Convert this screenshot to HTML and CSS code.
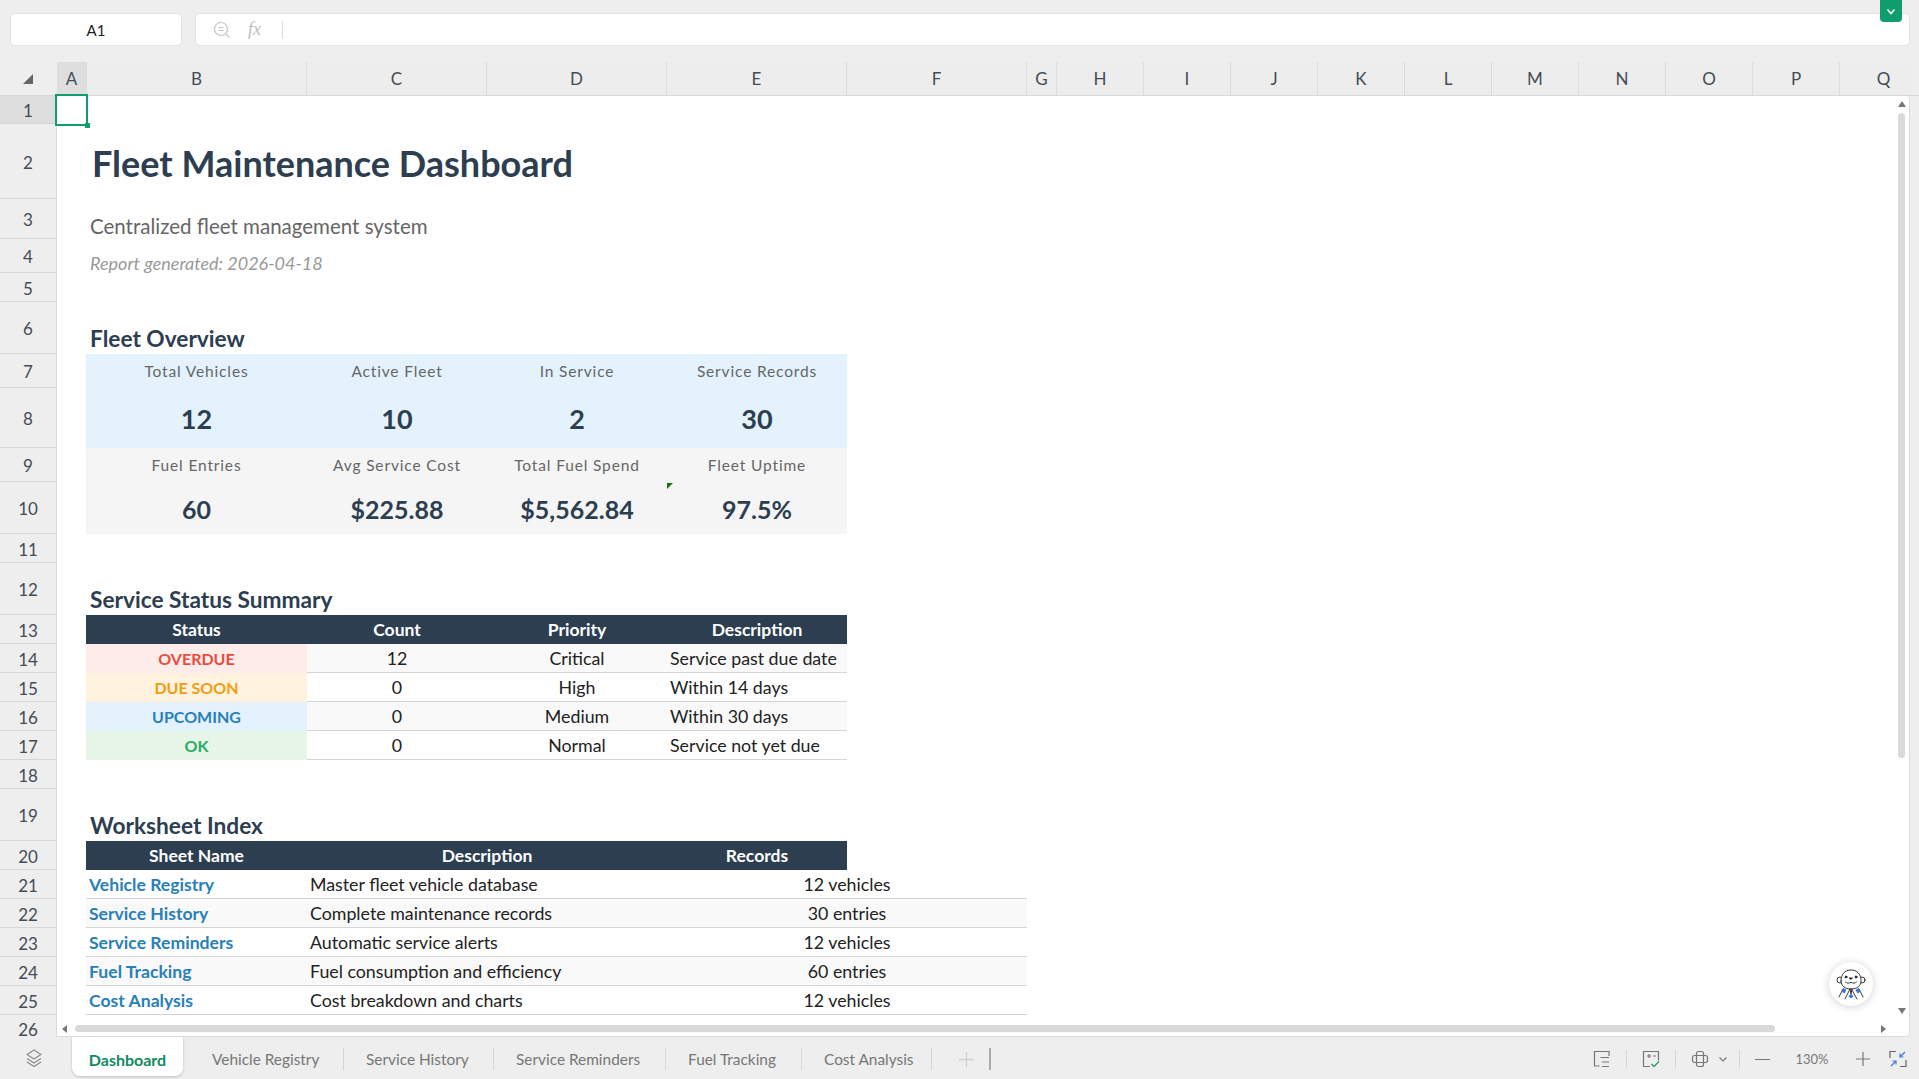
FILE: index.html
```html
<!DOCTYPE html>
<html lang="en">
<head>
  <meta charset="utf-8">
  <title>Fleet Maintenance Dashboard</title>
  <link rel="stylesheet" href="styles.css">
</head>
<body>
  <!-- Name box and formula bar -->
  <div class="formula-row">
    <div class="name-box">A1</div>
    <div class="formula-box">
      <svg class="zoom-icon" width="20" height="20" viewBox="0 0 20 20" fill="none" stroke="#c4c4c4" stroke-width="1.2">
        <circle cx="9" cy="9" r="6.500"/>
        <path d="M6.500 7.500h5M6.500 10.500h5M14 14l3.500 3.500"/>
      </svg>
      <span class="fx">fx</span>
      <span class="fx-divider"></span>
    </div>
    <div class="collapse-tab">
      <svg width="10" height="8" viewBox="0 0 10 8" fill="none" stroke="#fff" stroke-width="1.6"><path d="M1.500 1.500 5 5.500l3.500-4"/></svg>
    </div>
  </div>

  <!-- Column letters -->
  <div class="col-header">
    <div class="corner"><span class="corner-mark"></span></div>
    <div class="col-cells">
      <span class="col-cell is-active">A</span>
      <span class="col-cell">B</span>
      <span class="col-cell">C</span>
      <span class="col-cell">D</span>
      <span class="col-cell">E</span>
      <span class="col-cell">F</span>
      <span class="col-cell">G</span>
      <span class="col-cell">H</span>
      <span class="col-cell">I</span>
      <span class="col-cell">J</span>
      <span class="col-cell">K</span>
      <span class="col-cell">L</span>
      <span class="col-cell">M</span>
      <span class="col-cell">N</span>
      <span class="col-cell">O</span>
      <span class="col-cell">P</span>
      <span class="col-cell">Q</span>
    </div>
  </div>

  <div class="workspace">
    <!-- Row numbers -->
    <div class="row-header">
      <span class="row-cell is-active">1</span>
      <span class="row-cell">2</span>
      <span class="row-cell">3</span>
      <span class="row-cell">4</span>
      <span class="row-cell">5</span>
      <span class="row-cell">6</span>
      <span class="row-cell">7</span>
      <span class="row-cell">8</span>
      <span class="row-cell">9</span>
      <span class="row-cell">10</span>
      <span class="row-cell">11</span>
      <span class="row-cell">12</span>
      <span class="row-cell">13</span>
      <span class="row-cell">14</span>
      <span class="row-cell">15</span>
      <span class="row-cell">16</span>
      <span class="row-cell">17</span>
      <span class="row-cell">18</span>
      <span class="row-cell">19</span>
      <span class="row-cell">20</span>
      <span class="row-cell">21</span>
      <span class="row-cell">22</span>
      <span class="row-cell">23</span>
      <span class="row-cell">24</span>
      <span class="row-cell">25</span>
      <span class="row-cell">26</span>
    </div>

    <!-- Worksheet -->
    <div class="sheet">
      <div class="grid">
        <div class="r2 title">Fleet Maintenance Dashboard</div>
        <div class="r3 subtitle">Centralized fleet management system</div>
        <div class="r4 generated">Report generated: 2026-04-18</div>
        <div class="r6 section">Fleet Overview</div>

        <div class="r7 cb kpi-label blue">Total Vehicles</div>
        <div class="r7 cc kpi-label blue">Active Fleet</div>
        <div class="r7 cd kpi-label blue">In Service</div>
        <div class="r7 ce kpi-label blue">Service Records</div>
        <div class="r8 cb kpi-value blue">12</div>
        <div class="r8 cc kpi-value blue">10</div>
        <div class="r8 cd kpi-value blue">2</div>
        <div class="r8 ce kpi-value blue">30</div>

        <div class="r9 cb kpi-label grey">Fuel Entries</div>
        <div class="r9 cc kpi-label grey">Avg Service Cost</div>
        <div class="r9 cd kpi-label grey">Total Fuel Spend</div>
        <div class="r9 ce kpi-label grey">Fleet Uptime</div>
        <div class="r10 cb kpi-value kpi-small grey">60</div>
        <div class="r10 cc kpi-value kpi-small grey">$225.88</div>
        <div class="r10 cd kpi-value kpi-small grey">$5,562.84</div>
        <div class="r10 ce kpi-value kpi-small grey">97.5%</div>

        <div class="r12 section">Service Status Summary</div>
        <div class="r13 cb th">Status</div>
        <div class="r13 cc th">Count</div>
        <div class="r13 cd th">Priority</div>
        <div class="r13 ce th">Description</div>

        <div class="r14 cb status overdue">OVERDUE</div>
        <div class="r14 cc td center alt">12</div>
        <div class="r14 cd td center alt">Critical</div>
        <div class="r14 ce td alt">Service past due date</div>
        <div class="r15 cb status due-soon">DUE SOON</div>
        <div class="r15 cc td center">0</div>
        <div class="r15 cd td center">High</div>
        <div class="r15 ce td">Within 14 days</div>
        <div class="r16 cb status upcoming">UPCOMING</div>
        <div class="r16 cc td center alt">0</div>
        <div class="r16 cd td center alt">Medium</div>
        <div class="r16 ce td alt">Within 30 days</div>
        <div class="r17 cb status ok">OK</div>
        <div class="r17 cc td center">0</div>
        <div class="r17 cd td center">Normal</div>
        <div class="r17 ce td">Service not yet due</div>

        <div class="r19 section">Worksheet Index</div>
        <div class="r20 cb th">Sheet Name</div>
        <div class="r20 c-desc th">Description</div>
        <div class="r20 ce th">Records</div>

        <div class="r21 cb td link">Vehicle Registry</div>
        <div class="r21 c-desc td">Master fleet vehicle database</div>
        <div class="r21 c-rec td center">12 vehicles</div>
        <div class="r22 cb td link alt">Service History</div>
        <div class="r22 c-desc td alt">Complete maintenance records</div>
        <div class="r22 c-rec td center alt">30 entries</div>
        <div class="r23 cb td link">Service Reminders</div>
        <div class="r23 c-desc td">Automatic service alerts</div>
        <div class="r23 c-rec td center">12 vehicles</div>
        <div class="r24 cb td link alt">Fuel Tracking</div>
        <div class="r24 c-desc td alt">Fuel consumption and efficiency</div>
        <div class="r24 c-rec td center alt">60 entries</div>
        <div class="r25 cb td link">Cost Analysis</div>
        <div class="r25 c-desc td">Cost breakdown and charts</div>
        <div class="r25 c-rec td center">12 vehicles</div>
      </div>

      <!-- Things floating over the grid -->
      <div class="selection"><span class="selection-handle"></span></div>
      <span class="note-mark"></span>
      <span class="arrow arrow-up"></span>
      <span class="arrow arrow-down"></span>
      <span class="arrow arrow-left"></span>
      <span class="arrow arrow-right"></span>
      <span class="scroll-v"></span>
      <span class="scroll-h"></span>
      <div class="assistant">
        <svg width="44" height="44" viewBox="0 0 44 44" fill="none" stroke="#222" stroke-width="0.9" stroke-linecap="round" stroke-linejoin="round">
          <circle cx="11" cy="18" r="3" fill="#fff"/>
          <circle cx="33" cy="18" r="3" fill="#fff"/>
          <path d="M12 19c0-7 4-11 10-11s10 4 10 11c0 5-4 8-10 8s-10-3-10-8z" fill="#fff"/>
          <path d="M13 30l1.500-4 3 2-2 3.500zM31 30l-1.500-4-3 2 2 3.500z" fill="#3b78e0" stroke="none"/>
          <path d="M19.500 34.500l2.500-3 2.500 3-2.500 2z" fill="#3b78e0" stroke="none"/>
          <circle cx="17" cy="15" r="1" fill="#222"/>
          <circle cx="27" cy="15" r="1" fill="#222"/>
          <path d="M20.500 16h3l-1.500 1.200z" fill="#222"/>
          <path d="M16.500 20c1.500 1.500 3.500 1.500 5.500.3 2 1.200 4 1.200 5.500-.3"/>
          <path d="M10 35l4-8M34 35l-4-8M16 37l5-10 2 1 5 9M21 27l1 5 1-5"/>
        </svg>
      </div>
    </div>
  </div>

  <!-- Sheet tabs and status bar -->
  <div class="bottom-bar">
    <svg class="layers-icon" width="18" height="19" viewBox="0 0 18 19" fill="none" stroke="#8a8a8a" stroke-width="1.1" stroke-linejoin="round">
      <path d="M9 1l7 4.500-7 4.500-7-4.500z"/>
      <path d="M2 9.500 9 14l7-4.500M2 13l7 4.500 7-4.500"/>
    </svg>
    <div class="tabs">
      <span class="tab is-current">Dashboard</span>
      <span class="tab tab-vehicle">Vehicle Registry</span>
      <span class="tab tab-history">Service History</span>
      <span class="tab tab-reminders">Service Reminders</span>
      <span class="tab tab-fuel">Fuel Tracking</span>
      <span class="tab tab-cost">Cost Analysis</span>
      <svg class="tab-add" width="15" height="15" viewBox="0 0 15 15" stroke="#cfcfcf" stroke-width="1.300"><path d="M0 7.500h15M7.500 0v15"/></svg>
      <span class="tab-bar"></span>
    </div>
    <div class="status-tools">
      <svg width="18" height="18" viewBox="0 0 18 18" fill="none" stroke="#777" stroke-width="1.2">
        <path d="M16 6V1.500H1.500V16H6.500"/>
        <path d="M7.500 7.500H16M9 12H16M9 16.500H16"/>
      </svg>
      <span class="tool-sep"></span>
      <svg width="18" height="18" viewBox="0 0 18 18" fill="none" stroke="#777" stroke-width="1.2">
        <path d="M8 16.500H1.500v-15h15v9"/>
        <path d="M5 6h4M7 4v4M11 6h3"/>
        <path d="M9.500 14l2.500 2.500 5-5" stroke="#2e9e5b" stroke-width="1.4"/>
      </svg>
      <span class="tool-sep"></span>
      <svg width="18" height="18" viewBox="0 0 18 18" fill="none" stroke="#777" stroke-width="1.2">
        <rect x="5.500" y="1.500" width="7" height="15" rx="2"/>
        <rect x="1.500" y="5.500" width="15" height="7" rx="2"/>
      </svg>
      <svg class="chevron" width="10" height="7" viewBox="0 0 10 7" fill="none" stroke="#777" stroke-width="1.2"><path d="M1.500 1.500 5 5l3.500-3.500"/></svg>
      <span class="tool-sep tool-sep-tight"></span>
      <span class="zoom-minus"></span>
      <span class="zoom-level">130%</span>
      <svg class="zoom-plus" width="16" height="16" viewBox="0 0 16 16" stroke="#777" stroke-width="1.2"><path d="M1 8h14M8 1v14"/></svg>
      <svg class="fit-icon" width="18" height="18" viewBox="0 0 18 18" fill="none" stroke-width="1.2">
        <path d="M1 8V1.500h6M17 10v6.500h-6" stroke="#666"/>
        <path d="M16 2l-5 5M11 3.500V7h3.500M2 16l5-5M7 14.500V11H3.500" stroke="#3b7ddd"/>
      </svg>
    </div>
  </div>
</body>
</html>
```
FILE: styles.css
```css
* {
  box-sizing: border-box;
}

html, body {
  margin: 0;
  height: 100%;
  overflow: hidden;
}

body {
  display: flex;
  flex-direction: column;
  background-color: #eeeeee;
  font-family: Lato, "Open Sans", sans-serif;
  color: #222;
}

/* formula row */
.formula-row {
  position: relative;
  display: flex;
  flex-shrink: 0;
  gap: 13px;
  height: 62px;
  padding: 13px 9px 16px 10px;
}

.name-box {
  width: 172px;
  background-color: #fff;
  border: 1px solid #e4e4e4;
  border-radius: 5px;
  font-size: 15px;
  line-height: 32px;
  text-align: center;
}

.formula-box {
  flex: 1;
  display: flex;
  align-items: center;
  padding-left: 16px;
  background-color: #fff;
  border: 1px solid #e4e4e4;
  border-radius: 5px;
}

.fx {
  margin-left: 16px;
  font-family: "Liberation Serif", serif;
  font-style: italic;
  font-size: 18px;
  color: #bdbdbd;
}

.fx-divider {
  width: 1px;
  height: 18px;
  margin-left: 21px;
  background-color: #ddd;
}

.collapse-tab {
  position: absolute;
  top: 0;
  left: 1880px;
  width: 22px;
  height: 22px;
  display: flex;
  align-items: center;
  justify-content: center;
  padding-top: 2px;
  background-color: #0f9d6e;
  border-radius: 0 0 4px 4px;
}

/* column letters */
.col-header {
  display: flex;
  flex-shrink: 0;
  height: 34px;
  border-bottom: 1px solid #d8d8d8;
  padding-right: 9px;
}

.corner {
  width: 57px;
  flex-shrink: 0;
  position: relative;
}

.corner-mark {
  position: absolute;
  left: 23px;
  top: 12px;
  width: 0;
  height: 0;
  border-left: 10px solid transparent;
  border-bottom: 10px solid #666;
}

.col-cells {
  display: grid;
  flex: 1;
  min-width: 0;
  overflow: hidden;
  grid-template-columns: 30px 220px 180px 180px 180px 180px 30px repeat(10, 87px);
  background-color: #ededed;
}

.col-cell {
  display: flex;
  align-items: center;
  justify-content: center;
  border-right: 1px solid #d9dce0;
  font-size: 17px;
  color: #444c56;
}

.col-cell:last-child {
  border-right: none;
}

.col-cell.is-active {
  background-color: #dedede;
}

/* main area */
.workspace {
  flex: 1;
  display: flex;
  min-height: 0;
}

.row-header {
  width: 57px;
  flex-shrink: 0;
  display: grid;
  grid-template-rows: 28px 75px 40px 34px 29px 52px 34px 60px 34px 52px 29px 52px 29px 29px 29px 29px 29px 29px 52px 29px 29px 29px 29px 29px 29px 22px;
  border-right: 1px solid #dcdcdc;
}

.row-cell {
  display: flex;
  align-items: center;
  justify-content: center;
  padding-top: 2px;
  border-bottom: 1px solid #d3d7db;
  font-size: 17px;
  color: #444c56;
}

.row-cell:last-child {
  align-items: flex-end;
  padding-top: 0;
  border-bottom: none;
  line-height: 15px;
}

.row-cell.is-active {
  background-color: #dedede;
}

.sheet {
  position: relative;
  flex: 1;
  background-color: #fff;
  margin-right: 9px;
  border-radius: 0 4px 4px 0;
  border-bottom: 1px solid #dcdcdc;
  border-right: 1px solid #dcdcdc;
}

.grid {
  display: grid;
  grid-template-columns: 29px 221px 180px 180px 180px 180px;
  grid-template-rows: 28px 75px 40px 34px 29px 52px 34px 60px 34px 52px 29px 52px 29px 29px 29px 29px 29px 29px 52px 29px 29px 29px 29px 29px 29px;
}

.grid > div {
  display: flex;
  align-items: center;
  min-width: 0;
  white-space: nowrap;
}

/* grid placement */
.r2 { grid-row: 2; }
.r3 { grid-row: 3; }
.r4 { grid-row: 4; }
.r6 { grid-row: 6; }
.r7 { grid-row: 7; }
.r8 { grid-row: 8; }
.r9 { grid-row: 9; }
.r10 { grid-row: 10; }
.r12 { grid-row: 12; }
.r13 { grid-row: 13; }
.r14 { grid-row: 14; }
.r15 { grid-row: 15; }
.r16 { grid-row: 16; }
.r17 { grid-row: 17; }
.r19 { grid-row: 19; }
.r20 { grid-row: 20; }
.r21 { grid-row: 21; }
.r22 { grid-row: 22; }
.r23 { grid-row: 23; }
.r24 { grid-row: 24; }
.r25 { grid-row: 25; }

.cb { grid-column: 2; }
.cc { grid-column: 3; }
.cd { grid-column: 4; }
.ce { grid-column: 5; }
.c-desc { grid-column: 3 / span 2; }
.c-rec { grid-column: 5 / span 2; }

.title {
  grid-column: 2 / span 4;
  padding-left: 6px;
  padding-top: 2px;
  font-size: 36px;
  font-weight: 700;
  color: #2c3e50;
}

.subtitle {
  grid-column: 2 / span 4;
  padding-left: 4px;
  padding-top: 13px;
  font-size: 20.500px;
  color: #666;
}

.generated {
  grid-column: 2 / span 4;
  padding-left: 4px;
  padding-top: 13px;
  font-size: 18px;
  font-style: italic;
  color: #999;
}

.grid > .section {
  grid-column: 2 / span 4;
  align-items: flex-end;
  padding-left: 4px;
  padding-bottom: 2px;
  font-size: 22.700px;
  font-weight: 700;
  color: #2c3e50;
}

.kpi-label {
  justify-content: center;
  font-size: 15.500px;
  letter-spacing: 0.85px;
  color: #666;
}

.kpi-value {
  justify-content: center;
  padding-top: 1px;
  font-size: 27px;
  font-weight: 700;
  color: #2c3e50;
}

.kpi-small {
  font-size: 25px;
}

.blue { background-color: #e3f2fd; }
.grey { background-color: #f5f5f5; }

.th {
  justify-content: center;
  background-color: #2c3e50;
  color: #fff;
  font-size: 17.500px;
  font-weight: 700;
}

.td {
  padding-left: 3px;
  border-bottom: 1px solid #d5d5d5;
  font-size: 17.800px;
  color: #222;
}

.td.center {
  justify-content: center;
  padding-left: 0;
}

.alt { background-color: #f9f9f9; }

.link {
  font-size: 17.600px;
  font-weight: 700;
  color: #2980b9;
}

.status {
  justify-content: center;
  font-size: 16px;
  font-weight: 700;
}

.overdue { background-color: #fdecea; color: #e74c3c; }
.due-soon { background-color: #fff3e0; color: #f39c12; }
.upcoming { background-color: #e3f2fd; color: #2980b9; }
.ok { background-color: #e8f5e9; color: #27ae60; }

/* overlays on the sheet */
.selection {
  position: absolute;
  left: -2px;
  top: -2px;
  width: 33px;
  height: 32px;
  border: 2px solid #0f9d6e;
}

.selection-handle {
  position: absolute;
  right: -4px;
  bottom: -4px;
  width: 5px;
  height: 5px;
  background-color: #0f9d6e;
}

.note-mark {
  position: absolute;
  left: 610px;
  top: 387px;
  width: 0;
  height: 0;
  border-top: 6px solid #0a7a0a;
  border-right: 6px solid transparent;
}

.arrow {
  position: absolute;
  width: 0;
  height: 0;
}

.arrow-up {
  left: 1841px;
  top: 5px;
  border: 4px solid transparent;
  border-top: none;
  border-bottom: 6px solid #777;
}

.arrow-down {
  left: 1841px;
  top: 912px;
  border: 4px solid transparent;
  border-bottom: none;
  border-top: 6px solid #777;
}

.arrow-left {
  left: 5px;
  top: 929px;
  border: 4px solid transparent;
  border-left: none;
  border-right: 5px solid #777;
}

.arrow-right {
  left: 1824px;
  top: 929px;
  border: 4px solid transparent;
  border-right: none;
  border-left: 5px solid #777;
}

.scroll-v {
  position: absolute;
  left: 1841px;
  top: 17px;
  width: 7px;
  height: 645px;
  border-radius: 4px;
  background-color: #d9d9d9;
}

.scroll-h {
  position: absolute;
  left: 18px;
  top: 929px;
  width: 1700px;
  height: 7px;
  border-radius: 4px;
  background-color: #d9d9d9;
}

.assistant {
  position: absolute;
  left: 1772px;
  top: 866px;
  width: 44px;
  height: 44px;
  border-radius: 50%;
  background-color: #fff;
  box-shadow: 0 1px 8px rgba(0, 0, 0, 0.18);
}

/* bottom bar */
.bottom-bar {
  display: flex;
  align-items: flex-start;
  height: 42px;
  flex-shrink: 0;
}

.layers-icon {
  margin: 12px 0 0 25px;
}

.tabs {
  display: flex;
  margin-left: 29px;
  height: 44px;
  align-items: center;
  font-size: 15.400px;
  color: #777;
}

.tab {
  display: flex;
  align-items: center;
  padding-left: 22px;
  height: 22px;
  border-right: 1px solid #d5d5d5;
}

.tab.is-current {
  align-self: flex-start;
  justify-content: center;
  width: 111px;
  height: 39px;
  padding: 5px 0 0;
  background-color: #fff;
  border: none;
  border-radius: 0 0 8px 8px;
  box-shadow: 0 1px 3px rgba(0, 0, 0, 0.2);
  font-size: 16px;
  font-weight: 700;
  color: #0f8a5f;
}

.tab-vehicle { width: 161px; padding-left: 29px; }
.tab-history { width: 150px; }
.tab-reminders { width: 172px; }
.tab-fuel { width: 136px; }
.tab-cost { width: 130px; }

.tab-add {
  margin-left: 27px;
}

.tab-bar {
  width: 2px;
  height: 22px;
  margin-left: 15px;
  background-color: #aaa;
}

.status-tools {
  display: flex;
  align-items: center;
  gap: 15px;
  height: 44px;
  margin-left: auto;
  padding-right: 12px;
}

.tool-sep {
  width: 1px;
  height: 18px;
  background-color: #d5d5d5;
}

.tool-sep-tight {
  margin-left: -4px;
}

.chevron {
  margin-left: -6px;
}

.zoom-minus {
  width: 15px;
  height: 1px;
  background-color: #777;
}

.zoom-level {
  width: 46px;
  margin-left: 4px;
  text-align: center;
  font-size: 13px;
  color: #777;
}

.zoom-plus {
  margin-left: 5px;
}

.fit-icon {
  margin-left: 3px;
}
```
